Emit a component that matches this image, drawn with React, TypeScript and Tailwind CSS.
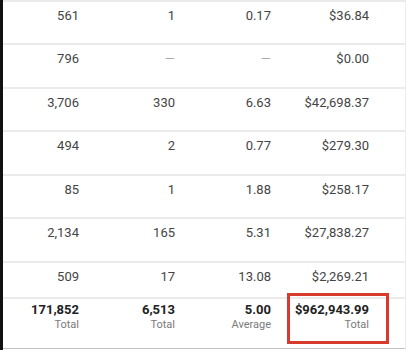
import React from "react";

const rows: { h: string; c: (string | null)[] }[] = [
  { h: "h-[43px]", c: ["561", "1", "0.17", "$36.84"] },
  { h: "h-[44px]", c: ["796", null, null, "$0.00"] },
  { h: "h-[43px]", c: ["3,706", "330", "6.63", "$42,698.37"] },
  { h: "h-[44px]", c: ["494", "2", "0.77", "$279.30"] },
  { h: "h-[43px]", c: ["85", "1", "1.88", "$258.17"] },
  { h: "h-[44px]", c: ["2,134", "165", "5.31", "$27,838.27"] },
  { h: "h-[36px]", c: ["509", "17", "13.08", "$2,269.21"] },
];

const totals = [
  ["171,852", "Total"],
  ["6,513", "Total"],
  ["5.00", "Average"],
  ["$962,943.99", "Total"],
];

const grid = "grid grid-cols-[92px_96px_96px_98px]";

export default function App() {
  return (
    <div
      className="relative flex w-[410px] h-[350px] bg-white overflow-hidden"
      style={{ fontFamily: "Roboto, 'Liberation Sans', sans-serif" }}
    >
      <div className="w-[3px] h-full bg-[#111]" />
      <div className="flex flex-col w-[403px] border-r border-[#ececec]">
        {rows.map((r, i) => (
          <div
            key={i}
            className={`${grid} ${r.h} border-t-2 border-[#ebebeb] pt-[4px] text-[13px] leading-[20px] text-[#444]`}
          >
            {r.c.map((v, j) => (
              <div key={j} className="pr-4 text-right">
                {v === null ? <span className="text-[#aaa]">—</span> : v}
              </div>
            ))}
          </div>
        ))}
        <div className={`${grid} h-[51px] border-t-2 border-[#ebebeb] pt-[3px]`}>
          {totals.map(([v, l], j) => (
            <div key={j} className="pr-4 text-right flex flex-col">
              <span className="text-[13px] leading-[16px] font-bold text-[#222]">{v}</span>
              <span className="text-[11px] leading-[13px] text-[#7a7a7a]">{l}</span>
            </div>
          ))}
        </div>
        <div className="h-[1px] bg-[#c4c4c4]" />
      </div>
      <div className="absolute left-[287px] top-[293px] w-[102px] h-[51px] border-[3px] border-[#d93a2e]" />
    </div>
  );
}
